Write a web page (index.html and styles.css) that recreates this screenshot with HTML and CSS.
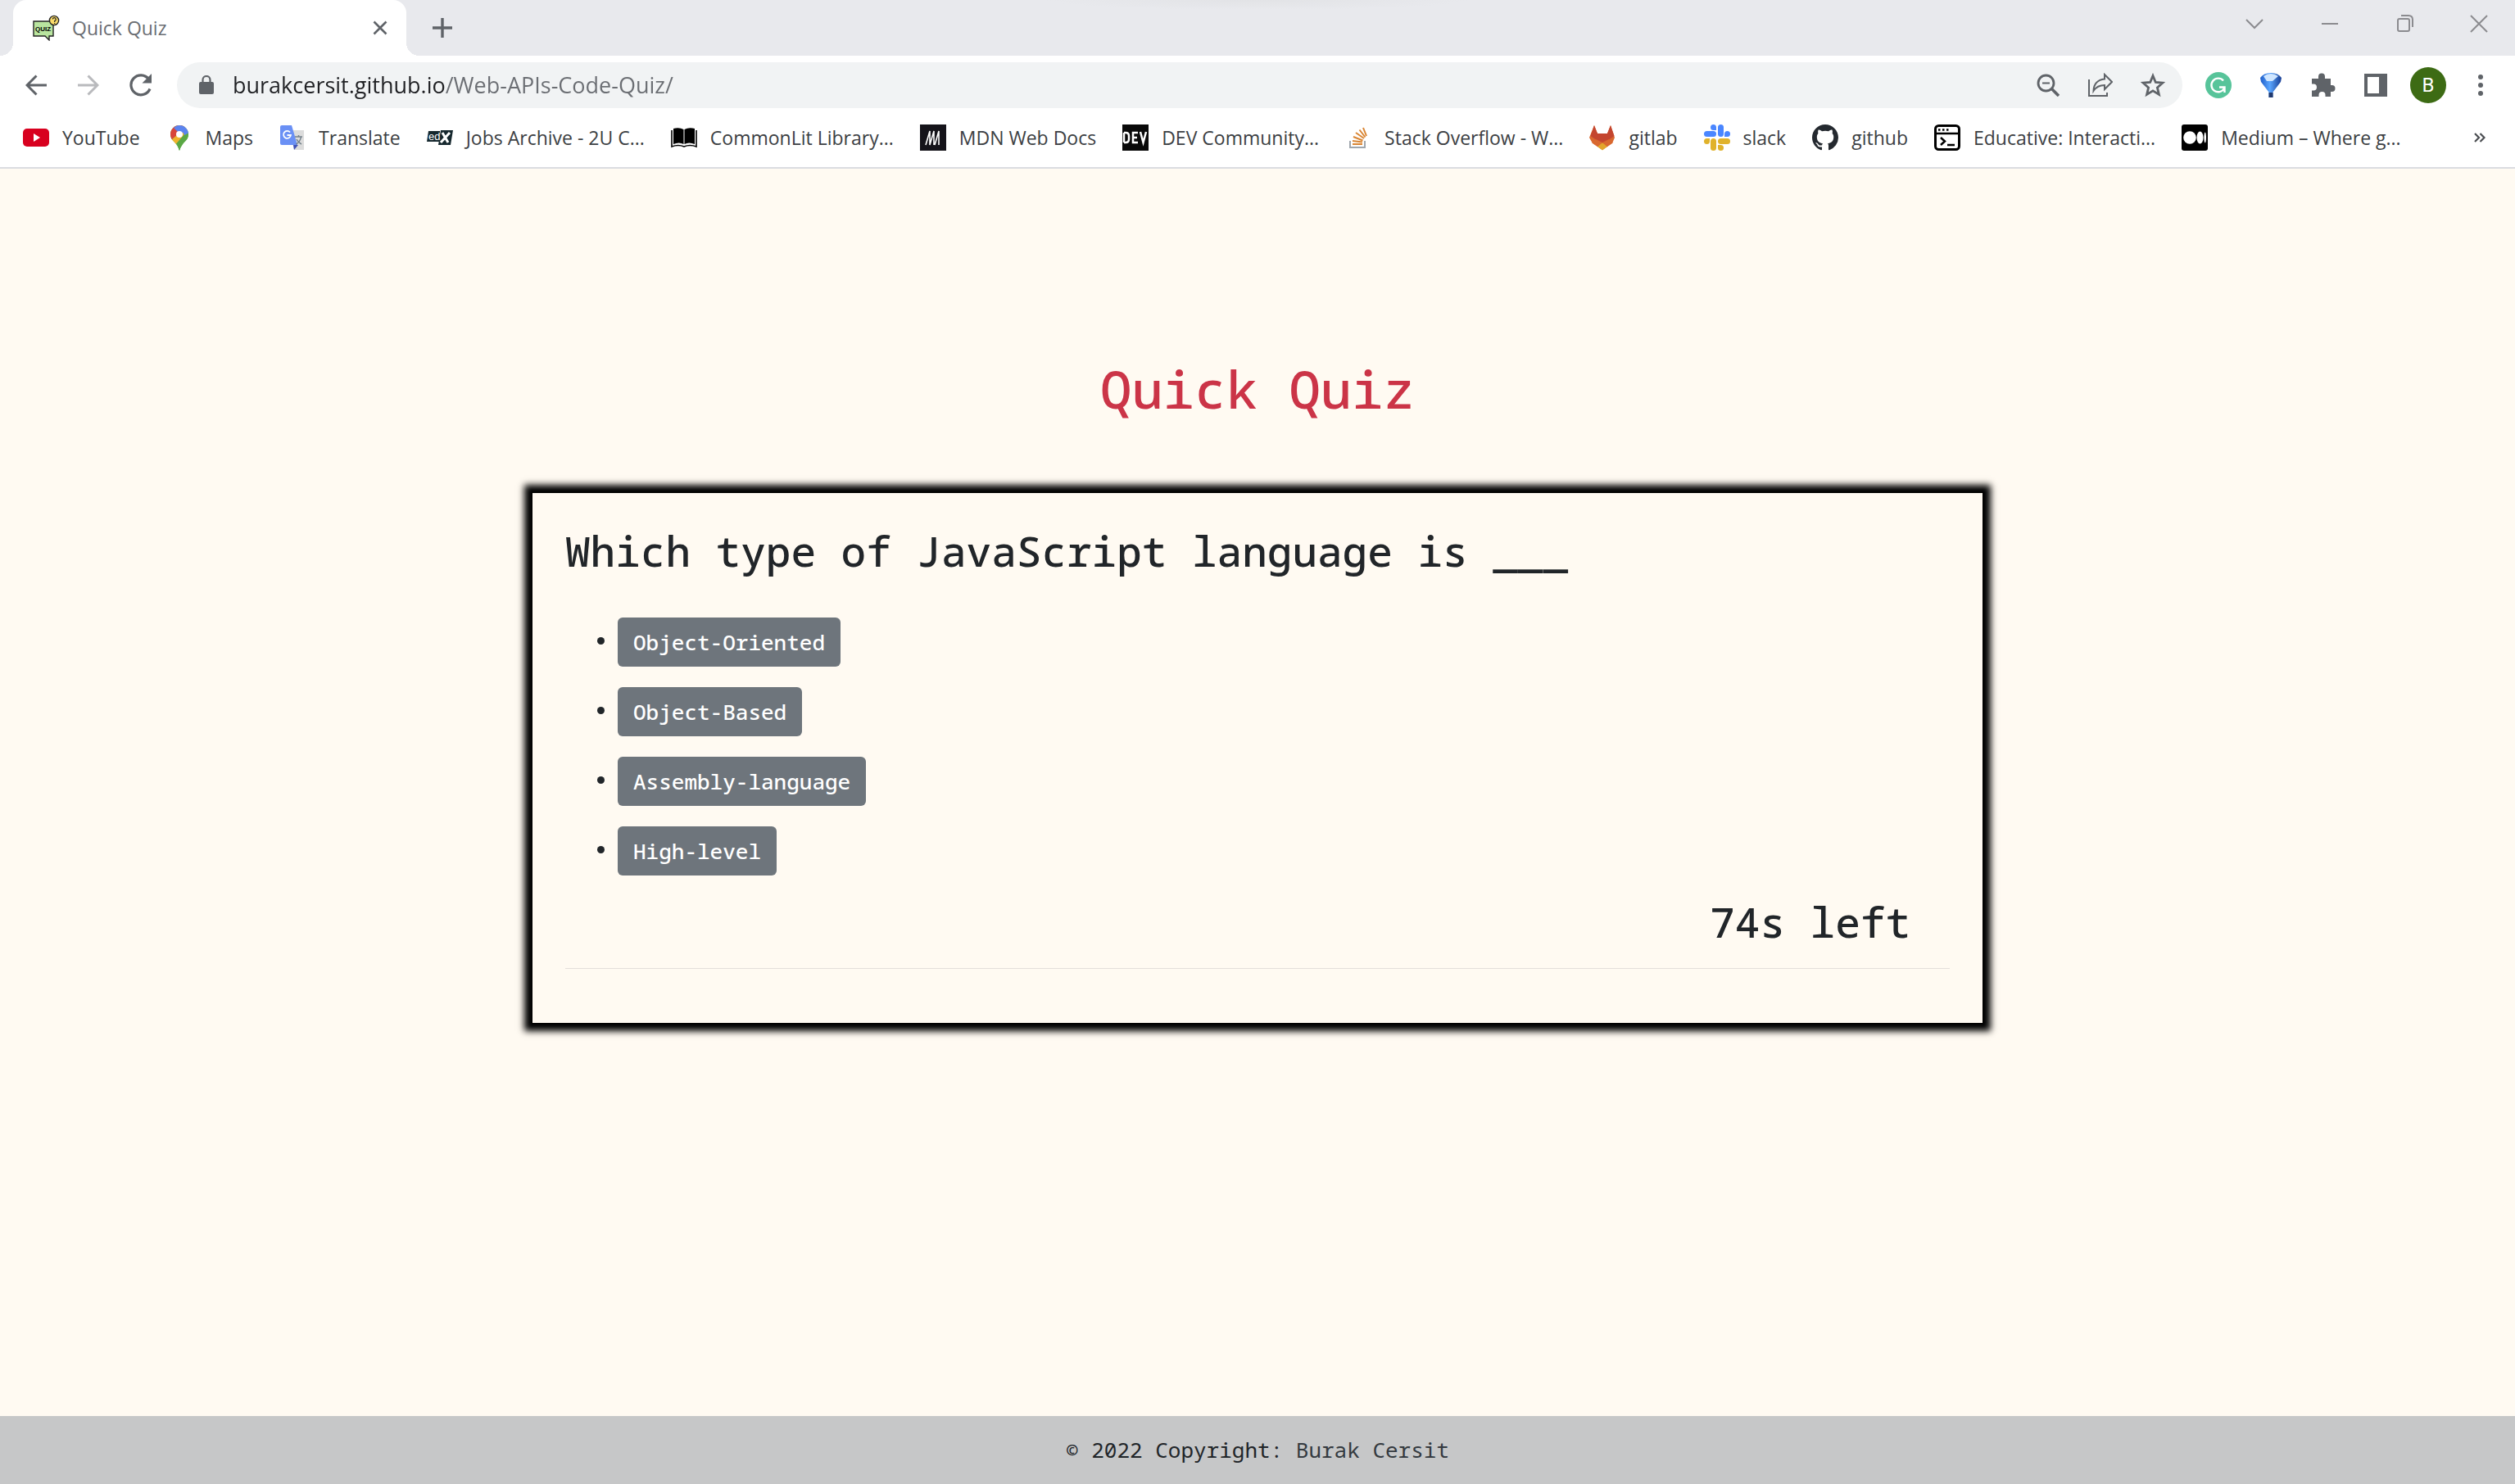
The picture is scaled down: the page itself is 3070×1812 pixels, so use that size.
FILE: index.html
```html
<!DOCTYPE html>
<html lang="en">
<head>
<meta charset="utf-8">
<title>Quick Quiz</title>
<link rel="stylesheet" href="styles.css">
</head>
<body>
<header class="browser">
  <div class="tabstrip">
    <div class="tab">
      <svg class="tab-icon" width="34" height="32" viewBox="0 0 34 32"><path d="M2 8h24v18h-5v5l-5-5H2z" fill="#b9e59f" stroke="#222" stroke-width="1.400"/><text x="4" y="20" class="quiz-mark">QUIZ</text><circle cx="27" cy="7" r="5.600" fill="#fbdc6a" stroke="#222" stroke-width="1.400"/><path d="M25.200 5.500a2 2 0 1 1 2.500 2v1.500M27.600 10v1" fill="none" stroke="#222" stroke-width="1.200"/></svg>
      <span class="tab-title">Quick Quiz</span>
      <button class="icon-button tab-close" aria-label="Close tab"><svg width="18" height="18" viewBox="0 0 18 18"><path d="M1.500 1.500l15 15M16.500 1.500l-15 15" stroke="#5f6368" stroke-width="2.600"/></svg></button>
    </div>
    <button class="icon-button new-tab" aria-label="New tab"><svg width="24" height="24" viewBox="0 0 24 24"><path d="M12 0v24M0 12h24" stroke="#5f6368" stroke-width="3.400"/></svg></button>
    <div class="window-controls">
      <button class="window-button" aria-label="Search tabs"><svg width="22" height="22" viewBox="0 0 22 22"><path d="M1 6l10 10L21 6" fill="none" stroke="#8b8b8f" stroke-width="2"/></svg></button>
      <button class="window-button" aria-label="Minimize"><svg width="22" height="22" viewBox="0 0 22 22"><path d="M1 11h20" stroke="#8b8b8f" stroke-width="2"/></svg></button>
      <button class="window-button" aria-label="Restore"><svg width="22" height="22" viewBox="0 0 22 22"><rect x="2" y="5" width="14" height="15" rx="2" fill="none" stroke="#8b8b8f" stroke-width="2"/><path d="M6 1h9q5 0 5 5v9" fill="none" stroke="#8b8b8f" stroke-width="2"/></svg></button>
      <button class="window-button" aria-label="Close"><svg width="22" height="22" viewBox="0 0 22 22"><path d="M1 1l20 20M21 1L1 21" stroke="#8b8b8f" stroke-width="2"/></svg></button>
    </div>
  </div>
  <div class="toolbar">
    <button class="icon-button" aria-label="Back"><svg width="26" height="26" viewBox="0 0 26 26"><path d="M26 13H2M13.500 1.500L2 13l11.500 11.500" fill="none" stroke="#5f6368" stroke-width="3"/></svg></button>
    <button class="icon-button" aria-label="Forward"><svg width="26" height="26" viewBox="0 0 26 26"><path d="M0 13h24M12.500 1.500L24 13 12.500 24.500" fill="none" stroke="#b9babd" stroke-width="3"/></svg></button>
    <button class="icon-button" aria-label="Reload"><svg width="28" height="28" viewBox="0 0 28 28"><path d="M25 18.500A12 12 0 1 1 23.500 6.500" fill="none" stroke="#5f6368" stroke-width="3.200"/><path d="M27 0v11.500H15.500z" fill="#5f6368"/></svg></button>
    <div class="omnibox">
      <svg width="18" height="24" viewBox="0 0 18 24"><rect x="0" y="8" width="18" height="15" rx="2" fill="#5f6368"/><path d="M4.500 9V5.500a4.500 4.500 0 0 1 9 0V9" fill="none" stroke="#5f6368" stroke-width="2.200"/></svg>
      <input class="url" type="text" aria-label="Address" value="burakcersit.github.io/Web-APIs-Code-Quiz/">
      <button class="icon-button" aria-label="Zoom"><svg width="28" height="28" viewBox="0 0 28 28"><circle cx="11.500" cy="11.500" r="9.500" fill="none" stroke="#5f6368" stroke-width="2.800"/><path d="M7 11.500h9" stroke="#5f6368" stroke-width="2"/><path d="M18 18l9 9" stroke="#5f6368" stroke-width="3.600"/></svg></button>
      <button class="icon-button" aria-label="Share"><svg width="30" height="30" viewBox="0 0 30 30"><path d="M1 8v20h22v-4" fill="none" stroke="#5f6368" stroke-width="2"/><path d="M20 2l9 9-9 9v-5Q11 15 6.500 22 7 9 20 7.500z" fill="none" stroke="#5f6368" stroke-width="2"/></svg></button>
      <button class="icon-button" aria-label="Bookmark"><svg width="30" height="30" viewBox="0 0 30 30"><path d="M15 3.500l3.300 8 8.600.700-6.500 5.700 2 8.500L15 21.900l-7.400 4.500 2-8.500-6.500-5.700 8.600-.700z" fill="none" stroke="#5f6368" stroke-width="2.800"/></svg></button>
    </div>
    <button class="icon-button" aria-label="Grammarly"><svg width="32" height="32" viewBox="0 0 32 32"><circle cx="16" cy="16" r="16" fill="#57c49a"/><path d="M22 10.500A8.300 8.300 0 1 0 23 20M17 18.500h6.500V25" fill="none" stroke="#fff" stroke-width="2.400"/></svg></button>
    <button class="icon-button" aria-label="Extension"><svg width="28" height="30" viewBox="0 0 28 30"><defs><linearGradient id="gem" x1="0" y1="0" x2="1" y2="0"><stop offset="0" stop-color="#1d5cc8"/><stop offset=".45" stop-color="#5aa6ff"/><stop offset="1" stop-color="#173c93"/></linearGradient></defs><path d="M1 6Q5 0 14 0t13 6l-1 5-9.500 12.500V30h-5v-6.500L2 11z" fill="url(#gem)"/><path d="M5 4Q9 1 14 1t9 3l-7 6H9z" fill="#cfe6ff"/><path d="M11.500 24h5v6h-5z" fill="#223a6e"/></svg></button>
    <button class="icon-button" aria-label="Extensions"><svg width="32" height="32" viewBox="0 0 32 32"><path d="M2 8h8V5.500a4 4 0 0 1 8 0V8h7v8h1.500a4 4 0 0 1 0 8H25v6h-6.500v-2a4 4 0 0 0-8 0v2H2v-7.500h2a4 4 0 0 0 0-8H2z" fill="#5f6368"/></svg></button>
    <button class="icon-button" aria-label="Side panel"><svg width="28" height="28" viewBox="0 0 28 28"><path fill-rule="evenodd" d="M0 0h28v28H0zM4 4v20h14V4z" fill="#5f6368"/></svg></button>
    <button class="icon-button" aria-label="Profile"><span class="avatar">B</span></button>
    <button class="icon-button" aria-label="Menu"><svg width="8" height="28" viewBox="0 0 8 28"><g fill="#5f6368"><circle cx="4" cy="4" r="3"/><circle cx="4" cy="14" r="3"/><circle cx="4" cy="24" r="3"/></g></svg></button>
  </div>
  <nav class="bookmarks" aria-label="Bookmarks">
    <a href="#"><svg width="32" height="32" viewBox="0 0 32 32"><rect y="5" width="32" height="22" rx="5" fill="#d8001f"/><path d="M13 11l8 5-8 5z" fill="#fff"/></svg>YouTube</a>
    <a href="#"><svg width="32" height="32" viewBox="0 0 32 32"><clipPath id="pin"><path d="M16 1A11 11 0 0 0 5 12c0 6 4 8 7 12q3 4 4 8 1-4 4-8c3-4 7-6 7-12A11 11 0 0 0 16 1z"/></clipPath><g clip-path="url(#pin)"><path d="M0 0h32v32H0z" fill="#5aa845"/><path d="M3 22L26 0h6L10 26z" fill="#f0b32c"/><path d="M0 0h24L13 13 2 22z" fill="#d8453a"/><path d="M9 4L15 0h20L17 12z" fill="#5b84f0"/><path d="M20 9l8-9 4 12-9 3z" fill="#5b84f0"/><path d="M22 13l10-5v24H12z" fill="#5aa845"/></g><circle cx="16" cy="12" r="4" fill="#fff"/></svg>Maps</a>
    <a href="#"><svg width="32" height="32" viewBox="0 0 32 32"><path d="M12 7h18v24H18z" fill="#dcdcdc"/><path d="M17 25h6l-5 6z" fill="#3f51b5"/><path d="M3 1h12l7 24H3q-2 0-2-2V3q0-2 2-2z" fill="#6a90f5"/><path d="M13 9.500A4.500 4.500 0 1 0 14 13H9.500" fill="none" stroke="#fff" stroke-width="1.800"/><path d="M19 15h9M23.500 13v2M26.500 15q-1 6-6 9M21 18q2 4 6 6" fill="none" stroke="#75828c" stroke-width="1.500"/></svg>Translate</a>
    <a href="#"><svg width="32" height="32" viewBox="0 0 32 32"><path d="M2 8h14v13H0zM17 7h15l-3 18H14z" fill="#16282e"/><text x="2" y="19" class="edx-mark">ed</text><path d="M19 10l7 12M28 10L17 22" stroke="#fff" stroke-width="3"/></svg>Jobs Archive - 2U C...</a>
    <a href="#"><svg width="32" height="32" viewBox="0 0 32 32"><path d="M3 5q7-2 12.500 1v18Q10 21 3 24zM29 5q-7-2-12.500 1v18Q22 21 29 24z"/><path d="M1 7v20q8-3 15 0 7-3 15 0V7" fill="none" stroke="#000" stroke-width="1.600"/></svg>CommonLit Library...</a>
    <a href="#"><svg width="32" height="32" viewBox="0 0 32 32"><path d="M0 0h32v32H0z" fill="#15141a"/><path d="M7 25l5-17v17l5-17v17M18 25l5-17v17" fill="none" stroke="#fff" stroke-width="1.600"/></svg>MDN Web Docs</a>
    <a href="#"><svg width="32" height="32" viewBox="0 0 32 32"><path d="M0 0h32v32H0z" fill="#090909"/><path d="M2 10v12M2 10h2q4 0 4 4v4q0 4-4 4H2M19 10h-6v12h6M13 16h5M22 9l3.500 13L29 9" fill="none" stroke="#fff" stroke-width="2.500"/></svg>DEV Community...</a>
    <a href="#"><svg width="32" height="32" viewBox="0 0 32 32"><path d="M6 20v8h18v-8" fill="none" stroke="#9fa6ad" stroke-width="2"/><path d="M9 24h12M9 20l12 1.500M10 15l11.500 4.500M13 10l10 7M17.500 6.500l7 9M22 4l4 10" stroke="#d98533" stroke-width="2"/></svg>Stack Overflow - W...</a>
    <a href="#"><svg width="32" height="32" viewBox="0 0 32 32"><path d="M6 1l4 10h12l4-10 5 15-3 7-12 8L4 23 0 16z" fill="#d9682f"/><path d="M6 1l4 10h12l4-10 4.500 13L16 24 1.500 14z" fill="#c4452f"/><path d="M10 27l6-5 6 5-6 4.500z" fill="#e2a52b"/><path d="M8 18l8 4-6 5-7-5zM24 18l-8 4 6 5 7-5z" fill="#d9682f"/></svg>gitlab</a>
    <a href="#"><svg width="32" height="32" viewBox="0 0 32 32"><g fill="#4a86ff"><rect y="8" width="15" height="7" rx="3.500"/><path d="M8 3.500a3.500 3.500 0 0 1 7 0V7h-3.500A3.500 3.500 0 0 1 8 3.500z"/><rect x="17" width="7" height="15" rx="3.500"/><path d="M25 15v-3.500a3.500 3.500 0 1 1 3.500 3.500z"/></g><g fill="#e0b22b"><rect x="17" y="17" width="15" height="7" rx="3.500"/><path d="M17 25h3.500a3.500 3.500 0 1 1-3.500 3.500z"/><rect x="8" y="17" width="7" height="15" rx="3.500"/><path d="M7 17v3.500A3.500 3.500 0 1 1 3.500 17z"/></g></svg>slack</a>
    <a href="#"><svg width="32" height="32" viewBox="0 0 16 16"><path fill="#24292f" d="M8 0C3.580 0 0 3.580 0 8c0 3.540 2.290 6.530 5.470 7.590.4.070.55-.17.55-.38 0-.19-.01-.82-.01-1.490-2.010.37-2.530-.49-2.690-.94-.09-.23-.48-.94-.82-1.130-.28-.15-.68-.52-.01-.53.63-.01 1.080.58 1.230.82.72 1.210 1.870.87 2.330.66.07-.52.28-.87.51-1.070-1.780-.2-3.640-.89-3.640-3.950 0-.87.31-1.590.82-2.150-.08-.2-.36-1.020.08-2.120 0 0 .67-.21 2.200.82a7.600 7.600 0 0 1 4 0c1.530-1.040 2.200-.82 2.200-.82.44 1.100.16 1.920.08 2.120.51.56.82 1.270.82 2.150 0 3.070-1.870 3.750-3.650 3.950.29.25.54.73.54 1.480 0 1.070-.01 1.930-.01 2.200 0 .21.15.46.55.38A8.010 8.010 0 0 0 16 8c0-4.420-3.580-8-8-8z"/></svg>github</a>
    <a href="#"><svg width="32" height="32" viewBox="0 0 32 32"><rect x="1.500" y="1.500" width="29" height="29" rx="4" fill="#fff" stroke="#000" stroke-width="3"/><path d="M1 11h30" stroke="#000" stroke-width="2.500"/><path d="M5 6.500h2.500M10 6.500h2.500M15 6.500h2.500M16 25h9M8 16l5 4.500L8 25" fill="none" stroke="#000" stroke-width="2.500"/></svg>Educative: Interacti...</a>
    <a href="#"><svg width="32" height="32" viewBox="0 0 32 32"><rect width="32" height="32" rx="3"/><g fill="#fff"><circle cx="10" cy="16" r="7.800"/><ellipse cx="22.500" cy="16" rx="4" ry="7.400"/><ellipse cx="28.700" cy="16" rx="1.300" ry="6.500"/></g></svg>Medium – Where g...</a>
    <button class="more" aria-label="More bookmarks"><svg width="14" height="12" viewBox="0 0 14 12"><path d="M1 1l5 5-5 5M7.500 1l5 5-5 5" fill="none" stroke="#4a4d51" stroke-width="2.200"/></svg></button>
  </nav>
</header>
<main class="page">
  <h1 class="title">Quick Quiz</h1>
  <section class="card">
    <h2 class="question">Which type of JavaScript language is ___</h2>
    <ul class="answers">
      <li><button class="answer">Object-Oriented</button></li>
      <li><button class="answer">Object-Based</button></li>
      <li><button class="answer">Assembly-language</button></li>
      <li><button class="answer">High-level</button></li>
    </ul>
    <p class="timer">74s left</p>
    <hr class="rule">
  </section>
</main>
<footer class="footer">© 2022 Copyright: <a href="#">Burak Cersit</a></footer>
</body>
</html>
```

FILE: styles.css
```css
* { box-sizing: border-box; }

body {
  margin: 0;
  min-height: 100vh;
  display: flex;
  flex-direction: column;
  background: #fffaf2;
  color: #212529;
  font-family: "Noto Sans Mono", "DejaVu Sans Mono", monospace;
  font-size: 26px;
  line-height: 38px;
}

button {
  border: 0;
  padding: 0;
  background: none;
  font: inherit;
}

svg { display: block; flex: none; }

/* Browser chrome */
.browser {
  background: #fff;
  border-bottom: 2px solid #dadce0;
  font-family: "Open Sans", "Noto Sans", sans-serif;
  font-size: 23px;
  line-height: 32px;
}

.tabstrip {
  display: flex;
  align-items: center;
  height: 68px;
  padding-left: 16px;
  background: radial-gradient(ellipse 260px 12px at 50% 0, #e2e3e6, #e8e9ed);
}

.tab {
  position: relative;
  display: flex;
  align-items: center;
  width: 480px;
  height: 68px;
  padding: 0 8px 0 23px;
  border-radius: 16px 16px 0 0;
  background: #fff;
}

.tab::before,
.tab::after {
  content: "";
  position: absolute;
  bottom: 0;
  width: 16px;
  height: 16px;
}

.tab::before { right: 100%; background: radial-gradient(circle at 0 0, transparent 16px, #fff 16px); }
.tab::after { left: 100%; background: radial-gradient(circle at 100% 0, transparent 16px, #fff 16px); }

.tab-title { flex: 1; margin-left: 15px; color: #6b6e73; }
.quiz-mark { font: bold 8px "Liberation Sans", sans-serif; }
.edx-mark { font: 13px "Liberation Sans", sans-serif; fill: #fff; }

.icon-button {
  display: flex;
  align-items: center;
  justify-content: center;
  flex: none;
  width: 64px;
  height: 56px;
}

.tab-close { width: 48px; }
.new-tab { margin-left: 12px; }

.window-controls {
  display: flex;
  align-self: flex-start;
  margin-left: auto;
}

.window-button {
  display: flex;
  align-items: center;
  justify-content: center;
  width: 92px;
  height: 58px;
}

.window-button:last-child { width: 88px; }

.toolbar {
  display: flex;
  align-items: center;
  height: 72px;
  padding: 0 10px 0 12px;
}

.omnibox {
  display: flex;
  flex: 1;
  align-items: center;
  height: 56px;
  margin: 0 12px;
  padding: 0 4px 0 27px;
  border-radius: 28px;
  background: #f1f3f4;
}

.url {
  flex: 1;
  min-width: 0;
  margin-left: 23px;
  padding: 0;
  border: 0;
  outline: 0;
  font: 27px/40px "Open Sans", "Noto Sans", sans-serif;
  color: #202124;
  background: linear-gradient(to right, #202124 260px, #6b6e73 260px);
  -webkit-background-clip: text;
  background-clip: text;
  -webkit-text-fill-color: transparent;
}

.avatar {
  width: 44px;
  height: 44px;
  border-radius: 50%;
  background: #3d6b14;
  color: #fff;
  font: 24px/44px Roboto, sans-serif;
}

.bookmarks {
  display: flex;
  align-items: center;
  gap: 32px;
  height: 64px;
  padding: 0 36px 8px 28px;
}

.bookmarks a {
  display: flex;
  align-items: center;
  gap: 16px;
  color: #3c4043;
  text-decoration: none;
  white-space: nowrap;
}

.more { margin-left: auto; }

/* Quiz page */
.page { flex: 1; padding-top: 230px; }

.title {
  margin: 0 0 88px;
  color: #cb3447;
  font-size: 64px;
  font-weight: 500;
  line-height: 78px;
  text-align: center;
}

.card {
  max-width: 1770px;
  margin: 0 auto;
  padding: 39px 40px 66px;
  box-shadow: 0 0 8px 10px #000;
}

.question,
.timer {
  margin: 0;
  font-size: 51px;
  font-weight: 500;
  line-height: 62px;
}

.answers {
  display: grid;
  gap: 25px;
  margin: 51px 0 25px;
  padding-left: 64px;
}

.answer {
  padding: 11px 19px;
  border-radius: 6px;
  background: #6e757c;
  color: #fff;
  font-weight: 500;
  vertical-align: middle;
}

.timer { padding-right: 48px; text-align: right; }

.rule {
  height: 1px;
  margin: 26px 0 0;
  border: 0;
  background: #e3dfda;
}

.footer {
  padding: 22px 0 23px;
  background: #c6c7c8;
  text-align: center;
}

.footer a { color: #343a40; text-decoration: none; }
```
